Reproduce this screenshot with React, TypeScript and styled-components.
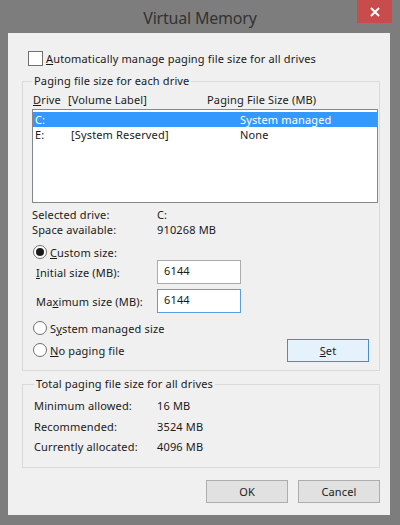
import React from "react";
import styled, { createGlobalStyle } from "styled-components";

const Global = createGlobalStyle`
  html, body { margin: 0; padding: 0; }
  body {
    font-family: "Noto Sans", "Open Sans", sans-serif;
    font-size: 11px;
    letter-spacing: 0.15px;
    color: #1a1a1a;
  }
  * { box-sizing: border-box; }
`;

const Window = styled.div`
  width: 400px;
  height: 525px;
  background: #7d7d7d;
  display: flex;
  flex-direction: column;
`;

const TitleBar = styled.div`
  height: 33px;
  display: grid;
  grid-template-columns: 1fr auto 1fr;
`;

const Title = styled.div`
  grid-column: 2;
  font-size: 16px;
  letter-spacing: -0.2px;
  color: #333;
  line-height: 36px;
`;

const CloseBtn = styled.div`
  grid-column: 3;
  justify-self: end;
  align-self: start;
  width: 35px;
  height: 23px;
  margin-right: 8px;
  background: #c94c4c;
  display: flex;
  align-items: center;
  justify-content: center;
`;

const Client = styled.div`
  flex: 1;
  margin: 0 10px 10px 8px;
  background: #f0f0f0;
  padding: 0 10px 0 14px;
  display: flex;
  flex-direction: column;
`;

const CheckRow = styled.label`
  display: flex;
  align-items: center;
  gap: 3px;
  height: 16px;
  margin: 17px 0 0 6px;
`;

const CheckBox = styled.span`
  width: 15px;
  height: 15px;
  border: 1px solid #6f6f6f;
  background: #fff;
`;

const Group = styled.fieldset<{ $top: number; $pb: number; $pl: number }>`
  margin: ${(p) => p.$top}px 0 0 0;
  min-width: 0;
  width: 358px;
  border: 1px solid #dadada;
  padding: 0 1px ${(p) => p.$pb}px ${(p) => p.$pl}px;
`;

const Legend = styled.legend`
  padding: 0 2px;
  line-height: 16px;
`;

const Header = styled.div`
  display: grid;
  grid-template-columns: 35px 139px 1fr;
  height: 16px;
  line-height: 16px;
  margin-top: 3px;
  padding-left: 1px;
`;

const ListBox = styled.div`
  margin-top: 1px;
  height: 94px;
  background: #fff;
  border: 1px solid #828790;
  padding: 2px 0 0 0;
`;

const ListRow = styled.div<{ $selected?: boolean }>`
  display: grid;
  grid-template-columns: 36px 169px 1fr;
  height: 15px;
  line-height: 15px;
  padding-left: 2px;
  background: ${(p) => (p.$selected ? "#3399ff" : "transparent")};
  color: ${(p) => (p.$selected ? "#fff" : "inherit")};
`;

const InfoBlock = styled.div<{ $top: number }>`
  margin-top: ${(p) => p.$top}px;
`;

const InfoRow = styled.div<{ $h: number; $col: number }>`
  display: grid;
  grid-template-columns: ${(p) => p.$col}px 1fr;
  height: ${(p) => p.$h}px;
  line-height: ${(p) => p.$h}px;
`;

const RadioRow = styled.label<{ $top: number }>`
  display: flex;
  align-items: center;
  gap: 3px;
  height: 16px;
  margin-top: ${(p) => p.$top}px;
  margin-left: 1px;
`;

const Radio = styled.span<{ $on?: boolean }>`
  width: 14px;
  height: 14px;
  border-radius: 50%;
  border: 1px solid #6f6f6f;
  background: #fff;
  display: flex;
  align-items: center;
  justify-content: center;
  &::after {
    content: "";
    display: ${(p) => (p.$on ? "block" : "none")};
    width: 8px;
    height: 8px;
    border-radius: 50%;
    background: #1a1a1a;
  }
`;

const FieldRow = styled.div<{ $top: number }>`
  display: grid;
  grid-template-columns: 121px 84px;
  align-items: center;
  margin-top: ${(p) => p.$top}px;
  padding-left: 4px;
`;

const Input = styled.div<{ $focus?: boolean }>`
  height: 24px;
  border: 1px solid ${(p) => (p.$focus ? "#5a9ee0" : "#acacac")};
  background: #fff;
  padding-left: 6px;
  line-height: 20px;
`;

const BottomRow = styled.div`
  display: flex;
  align-items: center;
  justify-content: space-between;
  margin-top: 2px;
  height: 24px;
  padding-right: 9px;
`;

const Button = styled.div<{ $default?: boolean }>`
  width: 82px;
  height: 23px;
  display: flex;
  align-items: center;
  justify-content: center;
  background: ${(p) => (p.$default ? "#e5f1fb" : "#e1e1e1")};
  border: 1px solid ${(p) => (p.$default ? "#4a8ccb" : "#adadad")};
`;

const Buttons = styled.div`
  display: flex;
  justify-content: flex-end;
  gap: 10px;
  margin-top: 12px;
`;

export default function App() {
  return (
    <>
      <Global />
      <Window>
        <TitleBar>
          <Title>Virtual Memory</Title>
          <CloseBtn>
            <svg width="10" height="10" viewBox="0 0 10 10">
              <path d="M1 1 L9 9 M9 1 L1 9" stroke="#fff" strokeWidth="2" />
            </svg>
          </CloseBtn>
        </TitleBar>
        <Client>
          <CheckRow>
            <CheckBox />
            <span>
              <u>A</u>utomatically manage paging file size for all drives
            </span>
          </CheckRow>
          <Group $top={7} $pb={8} $pl={9}>
            <Legend>Paging file size for each drive</Legend>
            <Header>
              <span>
                <u>D</u>rive
              </span>
              <span>[Volume Label]</span>
              <span>Paging File Size (MB)</span>
            </Header>
            <ListBox>
              <ListRow $selected>
                <span>C:</span>
                <span></span>
                <span>System managed</span>
              </ListRow>
              <ListRow>
                <span>E:</span>
                <span>[System Reserved]</span>
                <span>None</span>
              </ListRow>
            </ListBox>
            <InfoBlock $top={4}>
              <InfoRow $h={15} $col={125}>
                <span>Selected drive:</span>
                <span>C:</span>
              </InfoRow>
              <InfoRow $h={15} $col={125}>
                <span>Space available:</span>
                <span>910268 MB</span>
              </InfoRow>
            </InfoBlock>
            <RadioRow $top={7}>
              <Radio $on />
              <span>
                <u>C</u>ustom size:
              </span>
            </RadioRow>
            <FieldRow $top={0}>
              <span>
                <u>I</u>nitial size (MB):
              </span>
              <Input>6144</Input>
            </FieldRow>
            <FieldRow $top={5}>
              <span>
                Ma<u>x</u>imum size (MB):
              </span>
              <Input $focus>6144</Input>
            </FieldRow>
            <RadioRow $top={7}>
              <Radio />
              <span>
                S<u>y</u>stem managed size
              </span>
            </RadioRow>
            <BottomRow>
              <RadioRow $top={0}>
                <Radio />
                <span>
                  <u>N</u>o paging file
                </span>
              </RadioRow>
              <Button $default>
                <span>
                  <u>S</u>et
                </span>
              </Button>
            </BottomRow>
          </Group>
          <Group $top={5} $pb={9} $pl={11}>
            <Legend>Total paging file size for all drives</Legend>
            <InfoBlock $top={4}>
              <InfoRow $h={20.5} $col={123}>
                <span>Minimum allowed:</span>
                <span>16 MB</span>
              </InfoRow>
              <InfoRow $h={20.5} $col={123}>
                <span>Recommended:</span>
                <span>3524 MB</span>
              </InfoRow>
              <InfoRow $h={20.5} $col={123}>
                <span>Currently allocated:</span>
                <span>4096 MB</span>
              </InfoRow>
            </InfoBlock>
          </Group>
          <Buttons>
            <Button>OK</Button>
            <Button>Cancel</Button>
          </Buttons>
        </Client>
      </Window>
    </>
  );
}
